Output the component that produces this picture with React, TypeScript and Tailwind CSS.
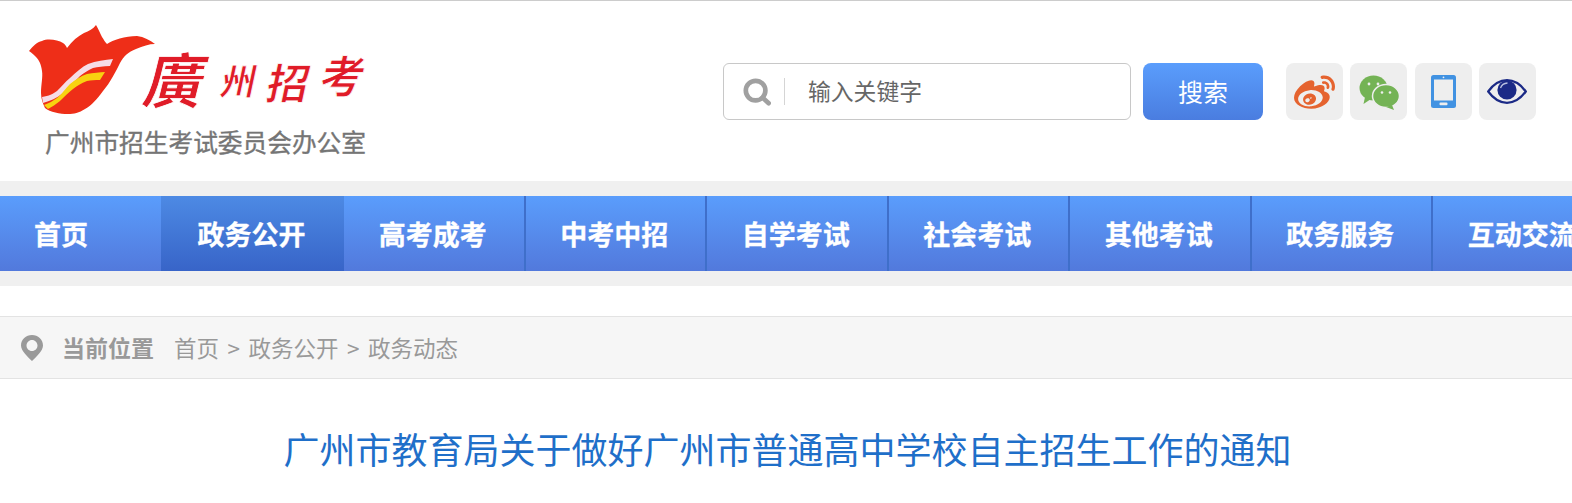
import React from "react";
import { FaWeibo } from "react-icons/fa";

const navItems = ["高考成考", "中考中招", "自学考试", "社会考试", "其他考试", "政务服务", "互动交流"];

function Logo() {
  return (
    <svg width="400" height="165" viewBox="0 0 400 165" className="shrink-0">
      <path
        d="M29 50 C33 45 37 41 42 40 C48 37 58 39 63 42 C65 43 66 45 67 47 C72 40 78 35 84 32 C89 30 93 28 96 24 C99 29 100 32 102 36 C104 39 105 41 107 43 C113 39 125 35 137 35 C144 36 150 39 155 43 C149 43 143 45 136 48 C128 51 124 55 120 62 C116 70 110 82 103 90 C97 98 92 104 85 108 C79 112 74 113 68 113 C60 113 50 111 45 107 C43 103 41 98 41 92 C41 84 43 76 42 70 C41 63 39 59 36 56 C34 54 32 52 29 50 Z"
        fill="#ee2e18"
      />
      <path d="M42 96 C49 95 53 93 57 90 C62 85 65 81 70 77 C76 71 82 66 88 63 C96 60 105 59 113 58 L110 65 C103 65 98 66 93 67 C88 69 84 72 80 75 C74 81 69 87 63 92 C57 97 50 100 43 102 Z" fill="#f6dce6" />
      <path d="M44 104 C49 102 53 100 57 97 C62 93 66 87 70 83 C75 79 81 75 87 73 C93 72 100 71 105 71 L100 79 C95 79 91 79 87 80 C81 82 77 85 73 88 C68 92 64 96 60 100 C56 103 52 106 48 108 Z" fill="#f8d210" />
      <g fill="#e01c28" stroke="#ffffff" strokeWidth="0.8" fontWeight="700" fontFamily="'Noto Sans CJK TC','Noto Sans CJK SC',sans-serif">
        <text x="140" y="102" fontSize="60" transform="translate(26 0) skewX(-14)">廣</text>
        <text x="216" y="94" fontSize="36" transform="translate(22 0) skewX(-12)">州</text>
        <text x="264" y="98" fontSize="42" transform="translate(21 0) skewX(-12)">招</text>
        <text x="318" y="92" fontSize="44" transform="translate(19 0) skewX(-12)">考</text>
      </g>
      <text x="45" y="151" fill="#757575" stroke="#757575" strokeWidth="0.35" fontSize="24.7" fontFamily="'Noto Sans CJK SC',sans-serif">
        广州市招生考试委员会办公室
      </text>
    </svg>
  );
}

function WeChat() {
  return (
    <svg width="42" height="36" viewBox="0 0 42 36">
      <ellipse cx="15.5" cy="14" rx="14" ry="12.5" fill="#74b355" />
      <path d="M7 23 L5.5 30 L13 25 Z" fill="#74b355" />
      <ellipse cx="28" cy="22" rx="13.5" ry="11.5" fill="#74b355" stroke="#eeeeee" strokeWidth="1.5" />
      <path d="M34 31 L36 36 L28 33 Z" fill="#74b355" />
      <circle cx="11" cy="10" r="1.4" fill="#eeeeee" />
      <circle cx="20" cy="10" r="1.4" fill="#eeeeee" />
      <circle cx="24" cy="18.5" r="1.3" fill="#eeeeee" />
      <circle cx="32" cy="18.5" r="1.3" fill="#eeeeee" />
    </svg>
  );
}

function Tablet() {
  return (
    <svg width="25" height="33" viewBox="0 0 25 33">
      <rect x="0" y="0" width="25" height="33" rx="2.5" fill="#4192e2" />
      <rect x="3" y="4.5" width="19" height="21" fill="#eeeeee" />
      <rect x="8.5" y="27.5" width="8" height="2.8" rx="1" fill="#eeeeee" />
      <circle cx="12.5" cy="2.3" r="0.9" fill="#eeeeee" />
    </svg>
  );
}

function Eye() {
  return (
    <svg width="40" height="25" viewBox="0 0 40 25">
      <path d="M1.2 12.5 C7 4.5 13 1.2 20 1.2 C27 1.2 33 4.5 38.8 12.5 C33 20.5 27 23.8 20 23.8 C13 23.8 7 20.5 1.2 12.5 Z" fill="none" stroke="#1b2a86" strokeWidth="2.2" />
      <circle cx="20" cy="11" r="9.6" fill="#1b2a86" />
      <path d="M13.5 9 C14.5 6 17 4.2 20.5 4" fill="none" stroke="#b9c0e0" strokeWidth="1.3" />
    </svg>
  );
}

function SearchGlyph() {
  return (
    <svg width="28" height="28" viewBox="0 0 30 30">
      <circle cx="13.5" cy="13.5" r="10.5" fill="none" stroke="#a0a0a0" strokeWidth="5" />
      <path d="M21 21 L27.5 27" stroke="#a0a0a0" strokeWidth="5" strokeLinecap="round" />
    </svg>
  );
}

function Pin() {
  return (
    <svg width="22" height="26" viewBox="0 0 22 26">
      <path fillRule="evenodd" d="M11 0 C17 0 22 4.6 22 10.5 C22 16 15 22 11 26 C7 22 0 16 0 10.5 C0 4.6 5 0 11 0 Z M11 5 C7.9 5 5.5 7.5 5.5 10.5 C5.5 13.5 7.9 16 11 16 C14.1 16 16.5 13.5 16.5 10.5 C16.5 7.5 14.1 5 11 5 Z" fill="#9a9a9a" />
    </svg>
  );
}

export default function App() {
  return (
    <div className="h-[503px] w-[1572px] overflow-hidden bg-white font-['Noto_Sans_CJK_SC',sans-serif]">
      <div className="flex h-[181px] items-start border-t border-[#cccccc]">
        <Logo />
        <div className="ml-[323px] mt-[62px] flex h-[57px] w-[408px] items-center rounded-[6px] border border-[#c8c8c8]">
          <div className="ml-[19px] flex"><SearchGlyph /></div>
          <div className="ml-[13px] h-[27px] w-px bg-[#d5d5d5]" />
          <span className="ml-[23px] text-[22.8px] text-[#666666]">输入关键字</span>
        </div>
        <div className="ml-[12px] mt-[62px] flex h-[57px] w-[120px] items-center justify-center rounded-[8px] bg-linear-to-b from-[#5a9dfc] to-[#4a7de0] text-[25px] text-white">
          搜索
        </div>
        <div className="ml-[23px] mt-[62px] flex gap-[7.3px]">
          <div className="flex h-[57px] w-[57px] items-center justify-center rounded-[8px] bg-[#eeeeee] pt-[3px]"><FaWeibo className="text-[#e5632f]" size={41} /></div>
          <div className="flex h-[57px] w-[57px] items-center justify-center rounded-[8px] bg-[#eeeeee]"><WeChat /></div>
          <div className="flex h-[57px] w-[57px] items-center justify-center rounded-[8px] bg-[#eeeeee]"><Tablet /></div>
          <div className="flex h-[57px] w-[57px] items-center justify-center rounded-[8px] bg-[#eeeeee]"><Eye /></div>
        </div>
      </div>

      <div className="border-y-[15px] border-[#f0f0f0]">
        <div className="flex h-[75px] bg-linear-to-b from-[#5a9dfc] to-[#5279dc] pt-[2px] text-[27px] font-bold text-white [-webkit-text-stroke:0.3px_#ffffff]">
          <div className="-mt-[2px] flex w-[161px] shrink-0 items-center pl-[34px] pt-[2px]">首页</div>
          <div className="-mt-[2px] flex w-[183px] shrink-0 items-center justify-center bg-linear-to-b from-[#4d8ae4] to-[#3864c8] pr-[2px] pt-[2px]">政务公开</div>
          {navItems.map((item) => (
            <div key={item} className="-mt-[2px] flex w-[181.5px] shrink-0 items-center justify-center whitespace-nowrap border-r-2 border-[#3f6fca] pr-[2px] pt-[2px]">
              {item}
            </div>
          ))}
        </div>
      </div>

      <div className="mt-[30px] flex h-[63px] items-center border-y border-[#e3e3e3] bg-[#f6f6f6] text-[22.5px] text-[#999999]">
        <div className="ml-[21px] flex"><Pin /></div>
        <span className="ml-[19px] text-[23px] font-bold">当前位置</span>
        <div className="ml-[20px] flex items-center">
          <span>首页</span>
          <span className="mx-[8.5px]">&gt;</span>
          <span>政务公开</span>
          <span className="mx-[8.5px]">&gt;</span>
          <span>政务动态</span>
        </div>
      </div>

      <h1 className="mt-[42px] pl-[3px] text-center text-[36px] font-normal leading-[54px] text-[#1f6fc9]">
        广州市教育局关于做好广州市普通高中学校自主招生工作的通知
      </h1>
    </div>
  );
}
